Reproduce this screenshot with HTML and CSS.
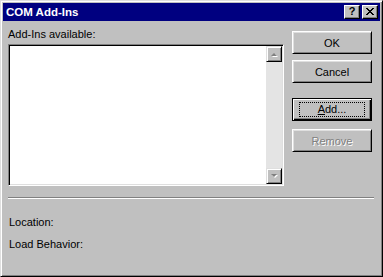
FILE: index.html
```html
<!DOCTYPE html>
<html lang="en">

<head>
	<meta charset="UTF-8">
	<title>COM Add-Ins</title>
	<link rel="stylesheet" href="styles.css">
</head>

<body>
	<div class="window">
		<div class="titlebar">
			<span class="title">COM Add-Ins</span>
			<div class="caption-buttons">
				<span class="cap-btn help">?</span>
				<span class="cap-btn close">
					<svg width="8" height="7" viewBox="0 0 8 7">
						<path d="M0 0h2v1h1v1h2v-1h1v-1h2v1h-1v1h-1v1h-1v1h1v1h1v1h1v1h-2v-1h-1v-1h-2v1h-1v1h-2v-1h1v-1h1v-1h1v-1h-1v-1h-1v-1h-1z" fill="#000"/>
					</svg>
				</span>
			</div>
		</div>

		<div class="content">
			<div class="main">
				<div class="list-col">
					<div class="label">Add-Ins available:</div>
					<div class="listbox">
						<div class="list-items"></div>
						<div class="scrollbar">
							<div class="sb-btn">
								<svg width="8" height="5" viewBox="0 0 8 5">
									<path d="M4 1l3 3h-6z" fill="#fff" transform="translate(1 1)"/>
									<path d="M4 1l3 3h-6z" fill="#808080"/>
								</svg>
							</div>
							<div class="sb-track"></div>
							<div class="sb-btn">
								<svg width="8" height="5" viewBox="0 0 8 5">
									<path d="M1 0h6l-3 3z" fill="#fff" transform="translate(1 1)"/>
									<path d="M1 0h6l-3 3z" fill="#808080"/>
								</svg>
							</div>
						</div>
					</div>
				</div>

				<div class="buttons">
					<button class="btn">OK</button>
					<button class="btn">Cancel</button>
					<button class="btn default gap-top"><span class="focus"><u>A</u>dd...</span></button>
					<button class="btn disabled">Remove</button>
				</div>
			</div>

			<div class="separator"></div>

			<div class="info">Location:</div>
			<div class="info second">Load Behavior:</div>
		</div>
	</div>
</body>

</html>
```

FILE: styles.css
```css
:root {
	--face: #c0c0c0;
	--light: #dfdfdf;
	--shadow: #808080;
	--navy: #000080;
}

body {
	margin: 0;
	padding: 0;
	font-family: "Liberation Sans", Arial, sans-serif;
	font-size: 11px;
	color: #000;
	background-color: var(--face);
}

.window {
	width: 383px;
	height: 277px;
	box-sizing: border-box;
	border: 1px solid;
	border-color: var(--light) #000 #000 var(--light);
	box-shadow: inset 1px 1px #fff, inset -1px -1px var(--shadow);
	padding: 2px;
	background-color: var(--face);
	display: flex;
	flex-direction: column;
}

/* caption */
.titlebar {
	height: 18px;
	background-color: var(--navy);
	display: flex;
	align-items: center;
	justify-content: space-between;
	padding: 0 2px 0 3px;
}

.title {
	color: #fff;
	font-weight: bold;
	font-size: 11.5px;
}

.caption-buttons {
	display: flex;
	gap: 2px;
}

.cap-btn {
	width: 16px;
	height: 14px;
	box-sizing: border-box;
	background-color: var(--face);
	border: 1px solid;
	border-color: #fff #000 #000 #fff;
	box-shadow: inset -1px -1px var(--shadow);
	display: flex;
	align-items: center;
	justify-content: center;
}

.help {
	font-weight: bold;
	font-size: 11px;
	line-height: 11px;
	padding-bottom: 1px;
}

.close svg {
	display: block;
	margin-bottom: 1px;
}

/* body */
.content {
	padding: 7px 6px 0 5px;
}

.main {
	display: flex;
	gap: 8px;
}

.list-col {
	width: 276px;
}

.label {
	line-height: 13px;
}

.listbox {
	margin-top: 3px;
	height: 142px;
	box-sizing: border-box;
	border: 1px solid;
	border-color: var(--shadow) #fff #fff var(--shadow);
	box-shadow: inset 1px 1px #000, inset -1px -1px var(--light);
	padding: 1px;
	background-color: #fff;
	display: flex;
}

.list-items {
	flex: 1;
}

.scrollbar {
	width: 16px;
	display: flex;
	flex-direction: column;
}

.sb-track {
	flex: 1;
	background-color: #e4e4e4;
}

.sb-btn {
	height: 16px;
	box-sizing: border-box;
	background-color: var(--face);
	border: 1px solid;
	border-color: var(--light) #000 #000 var(--light);
	box-shadow: inset 1px 1px #fff, inset -1px -1px var(--shadow);
	display: flex;
	align-items: center;
	justify-content: center;
}

.sb-btn svg {
	display: block;
}

/* push buttons */
.buttons {
	display: flex;
	flex-direction: column;
	width: 80px;
	padding-top: 3px;
}

.btn {
	height: 23px;
	box-sizing: border-box;
	margin: 0 0 6px;
	padding: 0;
	font-family: inherit;
	font-size: 11px;
	color: #000;
	background-color: var(--face);
	border: 1px solid;
	border-color: #fff #000 #000 #fff;
	box-shadow: inset 1px 1px var(--light), inset -1px -1px var(--shadow);
	display: flex;
	align-items: center;
	justify-content: center;
}

.btn.gap-top {
	margin-top: 9px;
	margin-bottom: 8px;
}

.btn.default {
	border-color: #000;
	box-shadow: inset 1px 1px #fff, inset -1px -1px var(--shadow), inset -2px -2px #000;
	box-shadow: inset 1px 1px #fff, inset -1px -1px #000, inset -2px -2px var(--shadow);
}

.focus {
	width: 64px;
	height: 13px;
	line-height: 13px;
	outline: 1px dotted #000;
	text-align: center;
}

.btn.disabled {
	color: var(--shadow);
	text-shadow: 1px 1px #fff;
}

/* bottom */
.separator {
	margin-top: 11px;
	border-top: 1px solid var(--shadow);
	border-bottom: 1px solid #fff;
	margin-right: 0;
	margin-left: 0;
}

.info {
	margin-top: 17px;
	padding-left: 1px;
	line-height: 13px;
}

.info.second {
	margin-top: 9px;
}
```
